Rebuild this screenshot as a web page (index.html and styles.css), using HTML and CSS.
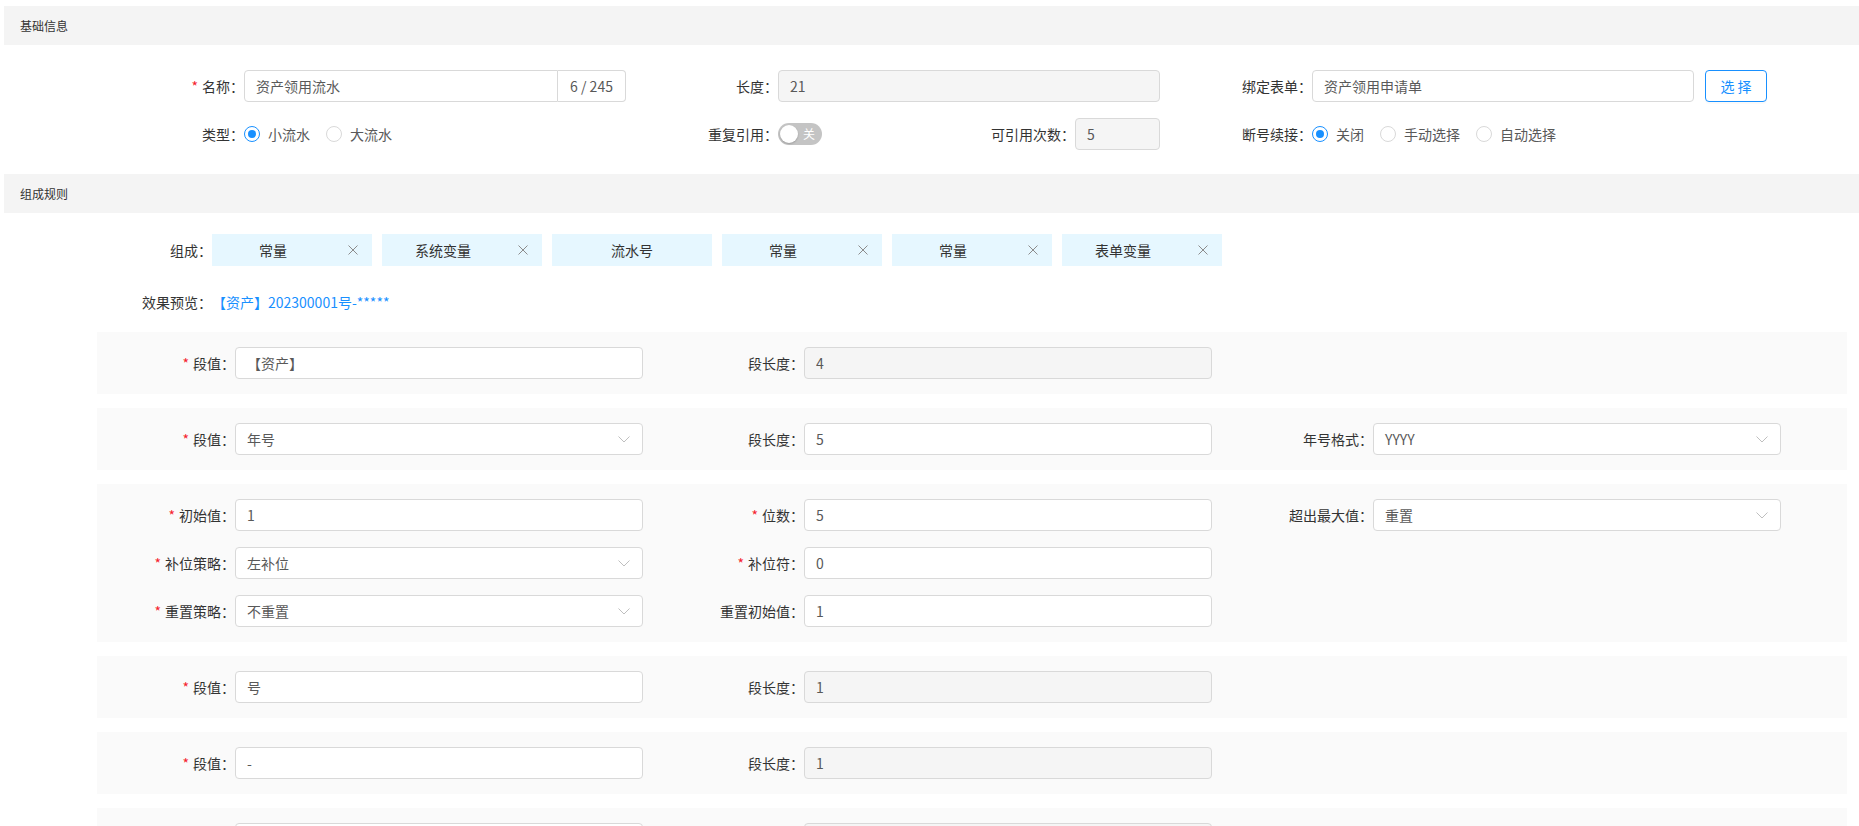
FILE: index.html
```html
<!DOCTYPE html>
<html lang="zh-CN">
<head>
  <meta charset="UTF-8">
  <meta name="viewport" content="width=device-width, initial-scale=1.0">
  <title>流水号规则</title>
  <link rel="stylesheet" href="styles.css">
</head>
<body>
  <div class="page">
    <div class="panel-title">基础信息</div>

    <div class="basic-form">
      <div class="item">
        <label class="label required">名称：</label>
        <div class="control">
          <div class="input-group">
            <input class="input" value="资产领用流水">
            <span class="addon">6 / 245</span>
          </div>
        </div>
      </div>
      <div class="item">
        <label class="label">长度：</label>
        <div class="control"><input class="input is-disabled" value="21" readonly></div>
      </div>
      <div class="item">
        <label class="label">绑定表单：</label>
        <div class="control"><input class="input" value="资产领用申请单"></div>
        <button type="button" class="btn">选 择</button>
      </div>

      <div class="item">
        <label class="label">类型：</label>
        <div class="control radio-group">
          <label class="radio checked"><span class="radio-dot"></span><span class="radio-text">小流水</span></label>
          <label class="radio"><span class="radio-dot"></span><span class="radio-text">大流水</span></label>
        </div>
      </div>
      <div class="item">
        <label class="label">重复引用：</label>
        <div class="control split">
          <span class="switch"><span class="switch-knob"></span><span class="switch-text">关</span></span>
          <label class="sub-label">可引用次数：</label>
          <input class="input input-small is-disabled" value="5" readonly>
        </div>
      </div>
      <div class="item">
        <label class="label">断号续接：</label>
        <div class="control radio-group">
          <label class="radio checked"><span class="radio-dot"></span><span class="radio-text">关闭</span></label>
          <label class="radio"><span class="radio-dot"></span><span class="radio-text">手动选择</span></label>
          <label class="radio"><span class="radio-dot"></span><span class="radio-text">自动选择</span></label>
        </div>
      </div>
    </div>

    <div class="panel-title">组成规则</div>

    <div class="rule-row tags-row">
      <label class="rule-label">组成：</label>
      <div class="tags">
        <div class="tag"><span class="tag-text">常量</span><span class="tag-close"><svg width="10" height="10" viewBox="0 0 10 10"><path d="M0.5 0.5 9.5 9.5 M9.5 0.5 0.5 9.5" /></svg></span></div>
        <div class="tag"><span class="tag-text">系统变量</span><span class="tag-close"><svg width="10" height="10" viewBox="0 0 10 10"><path d="M0.5 0.5 9.5 9.5 M9.5 0.5 0.5 9.5" /></svg></span></div>
        <div class="tag"><span class="tag-text">流水号</span></div>
        <div class="tag"><span class="tag-text">常量</span><span class="tag-close"><svg width="10" height="10" viewBox="0 0 10 10"><path d="M0.5 0.5 9.5 9.5 M9.5 0.5 0.5 9.5" /></svg></span></div>
        <div class="tag"><span class="tag-text">常量</span><span class="tag-close"><svg width="10" height="10" viewBox="0 0 10 10"><path d="M0.5 0.5 9.5 9.5 M9.5 0.5 0.5 9.5" /></svg></span></div>
        <div class="tag"><span class="tag-text">表单变量</span><span class="tag-close"><svg width="10" height="10" viewBox="0 0 10 10"><path d="M0.5 0.5 9.5 9.5 M9.5 0.5 0.5 9.5" /></svg></span></div>
      </div>
    </div>

    <div class="rule-row preview-row">
      <label class="rule-label">效果预览：</label>
      <span class="preview">【资产】202300001号-*****</span>
    </div>

    <!-- 常量 -->
    <div class="segment">
      <div class="item">
        <label class="label required">段值：</label>
        <div class="control"><input class="input" value="【资产】"></div>
      </div>
      <div class="item">
        <label class="label">段长度：</label>
        <div class="control"><input class="input is-disabled" value="4" readonly></div>
      </div>
    </div>

    <!-- 系统变量 -->
    <div class="segment">
      <div class="item">
        <label class="label required">段值：</label>
        <div class="control"><div class="select"><span>年号</span><svg class="arrow" width="12" height="7" viewBox="0 0 12 7"><path d="M0.5 0.5 6 6 11.5 0.5" /></svg></div></div>
      </div>
      <div class="item">
        <label class="label">段长度：</label>
        <div class="control"><input class="input" value="5"></div>
      </div>
      <div class="item">
        <label class="label">年号格式：</label>
        <div class="control"><div class="select"><span>YYYY</span><svg class="arrow" width="12" height="7" viewBox="0 0 12 7"><path d="M0.5 0.5 6 6 11.5 0.5" /></svg></div></div>
      </div>
    </div>

    <!-- 流水号 -->
    <div class="segment">
      <div class="item">
        <label class="label required">初始值：</label>
        <div class="control"><input class="input" value="1"></div>
      </div>
      <div class="item">
        <label class="label required">位数：</label>
        <div class="control"><input class="input" value="5"></div>
      </div>
      <div class="item">
        <label class="label">超出最大值：</label>
        <div class="control"><div class="select"><span>重置</span><svg class="arrow" width="12" height="7" viewBox="0 0 12 7"><path d="M0.5 0.5 6 6 11.5 0.5" /></svg></div></div>
      </div>
      <div class="item">
        <label class="label required">补位策略：</label>
        <div class="control"><div class="select"><span>左补位</span><svg class="arrow" width="12" height="7" viewBox="0 0 12 7"><path d="M0.5 0.5 6 6 11.5 0.5" /></svg></div></div>
      </div>
      <div class="item">
        <label class="label required">补位符：</label>
        <div class="control"><input class="input" value="0"></div>
      </div>
      <div class="item"></div>
      <div class="item">
        <label class="label required">重置策略：</label>
        <div class="control"><div class="select"><span>不重置</span><svg class="arrow" width="12" height="7" viewBox="0 0 12 7"><path d="M0.5 0.5 6 6 11.5 0.5" /></svg></div></div>
      </div>
      <div class="item">
        <label class="label">重置初始值：</label>
        <div class="control"><input class="input" value="1"></div>
      </div>
    </div>

    <!-- 常量 -->
    <div class="segment">
      <div class="item">
        <label class="label required">段值：</label>
        <div class="control"><input class="input" value="号"></div>
      </div>
      <div class="item">
        <label class="label">段长度：</label>
        <div class="control"><input class="input is-disabled" value="1" readonly></div>
      </div>
    </div>

    <!-- 常量 -->
    <div class="segment">
      <div class="item">
        <label class="label required">段值：</label>
        <div class="control"><input class="input" value="-"></div>
      </div>
      <div class="item">
        <label class="label">段长度：</label>
        <div class="control"><input class="input is-disabled" value="1" readonly></div>
      </div>
    </div>

    <!-- 表单变量 (below the fold) -->
    <div class="segment">
      <div class="item">
        <label class="label"></label>
        <div class="control"><div class="select"></div></div>
      </div>
      <div class="item">
        <label class="label"></label>
        <div class="control"><input class="input is-disabled" readonly></div>
      </div>
    </div>
  </div>
</body>
</html>
```

FILE: styles.css
```css
html, body {
  margin: 0;
  overflow: hidden;
}

body {
  background: #fff;
  font-family: "Noto Sans CJK SC", "Noto Sans", sans-serif;
  font-size: 14px;
  color: #333;
}

.page {
  padding: 6px 0 0 4px;
}

.panel-title {
  height: 39px;
  line-height: 39px;
  padding-left: 16px;
  background: #f4f4f4;
  font-size: 12px;
  color: #333;
}

/* 基础信息 */
.basic-form {
  display: grid;
  grid-template-columns: repeat(3, 534px);
  row-gap: 16px;
  padding: 25px 0 24px 100px;
}

.item {
  display: flex;
  align-items: center;
  height: 32px;
}

.label {
  width: 140px;
  flex-shrink: 0;
  text-align: right;
  line-height: 32px;
  color: #333;
  white-space: nowrap;
}

.required::before {
  content: "*";
  color: #f5222d;
  margin-right: 4px;
}

.control {
  width: 382px;
  flex-shrink: 0;
}

.input {
  box-sizing: border-box;
  width: 100%;
  height: 32px;
  padding: 0 11px;
  border: 1px solid #d9d9d9;
  border-radius: 4px;
  background: #fff;
  font-family: inherit;
  font-size: 14px;
  color: #595959;
  outline: none;
}

.is-disabled {
  background: #f5f5f5;
}

.input-group {
  display: flex;
  height: 32px;
}

.input-group .input {
  border-radius: 4px 0 0 4px;
  flex: 1;
  min-width: 0;
}

.addon {
  box-sizing: border-box;
  width: 68px;
  line-height: 30px;
  text-align: center;
  border: 1px solid #d9d9d9;
  border-left: 0;
  border-radius: 0 4px 4px 0;
  color: #595959;
}

.btn {
  margin-left: 11px;
  flex-shrink: 0;
  width: 62px;
  height: 32px;
  border: 1px solid #1890ff;
  border-radius: 4px;
  background: #fff;
  color: #1890ff;
  font-family: inherit;
  font-size: 14px;
  box-shadow: 0 2px 0 rgba(0, 0, 0, 0.02);
}

.radio-group {
  display: flex;
  align-items: center;
}

.radio {
  display: flex;
  align-items: center;
  margin-right: 8px;
  color: #595959;
}

.radio-dot {
  box-sizing: border-box;
  width: 16px;
  height: 16px;
  border: 1px solid #d9d9d9;
  border-radius: 50%;
  background: #fff;
  position: relative;
}

.radio.checked .radio-dot {
  border-color: #1890ff;
}

.radio.checked .radio-dot::after {
  content: "";
  position: absolute;
  left: 3px;
  top: 3px;
  width: 8px;
  height: 8px;
  border-radius: 50%;
  background: #1890ff;
}

.radio-text {
  padding: 0 8px;
}

.split {
  display: flex;
  align-items: center;
}

.switch {
  position: relative;
  width: 44px;
  height: 22px;
  border-radius: 11px;
  background: #c4c4c4;
}

.switch-knob {
  position: absolute;
  left: 2px;
  top: 2px;
  width: 18px;
  height: 18px;
  border-radius: 50%;
  background: #fff;
  box-shadow: 0 1px 2px rgba(0, 0, 0, 0.2);
}

.switch-text {
  position: absolute;
  right: 7px;
  top: 0;
  line-height: 22px;
  font-size: 12px;
  color: #fff;
}

.sub-label {
  margin-left: auto;
  color: #333;
  white-space: nowrap;
}

.input-small {
  width: 85px;
}

/* 组成规则 */
.rule-row {
  display: flex;
  align-items: center;
  height: 32px;
  margin-left: 93px;
}

.tags-row {
  margin-top: 21px;
}

.preview-row {
  margin-top: 20px;
}

.rule-label {
  width: 115px;
  flex-shrink: 0;
  text-align: right;
  color: #333;
}

.tags {
  display: flex;
  gap: 10px;
}

.tag {
  display: flex;
  align-items: center;
  width: 160px;
  height: 32px;
  background: #e6f7ff;
  color: #333;
}

.tag-text {
  flex: 1;
  text-align: center;
}

.tag-close {
  width: 38px;
  display: flex;
  justify-content: center;
  align-items: center;
}

.tag-close path {
  fill: none;
  stroke: #8c8c8c;
  stroke-width: 1;
}

.preview {
  color: #1890ff;
}

.segment {
  display: grid;
  grid-template-columns: repeat(3, 569px);
  row-gap: 16px;
  margin: 0 12px 14px 93px;
  padding: 15px 0;
  background: #fafafa;
}

.preview-row + .segment {
  margin-top: 14px;
}

.segment .label {
  width: 138px;
}

.segment .control {
  width: 408px;
}

.select {
  box-sizing: border-box;
  display: flex;
  align-items: center;
  justify-content: space-between;
  height: 32px;
  padding: 0 12px 0 11px;
  border: 1px solid #d9d9d9;
  border-radius: 4px;
  background: #fff;
  color: #595959;
}

.arrow path {
  fill: none;
  stroke: #bfbfbf;
  stroke-width: 1;
}
```
